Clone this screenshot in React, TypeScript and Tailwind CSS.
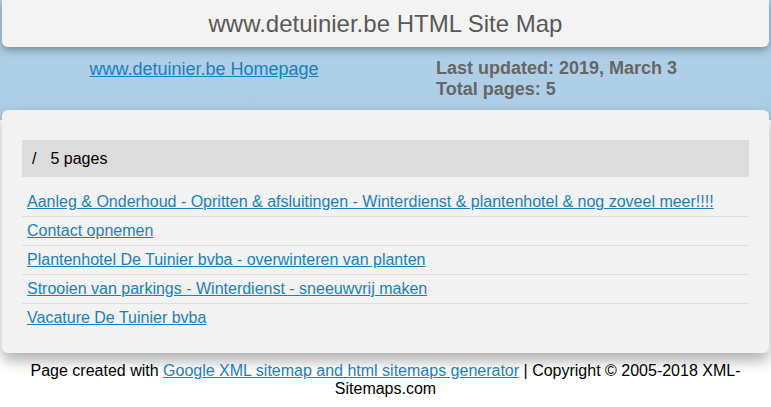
import React from "react";

const links = [
  "Aanleg & Onderhoud - Opritten & afsluitingen - Winterdienst & plantenhotel & nog zoveel meer!!!!",
  "Contact opnemen",
  "Plantenhotel De Tuinier bvba - overwinteren van planten",
  "Strooien van parkings - Winterdienst - sneeuwvrij maken",
  "Vacature De Tuinier bvba",
];

export default function App() {
  return (
    <div
      className="min-h-[407px] w-full bg-[linear-gradient(180deg,#b1d1e8_0px,#adcee6_100px,#a9c9e0_120px,#ffffff_120px)] font-['Liberation_Sans',Arial,sans-serif]"
    >
      <div className="mx-[2px] flex h-[47px] items-center justify-center rounded-b-[6px] bg-[#f3f3f3] shadow-[0_3px_8px_rgba(0,0,0,0.35)]">
        <h1 className="text-[24px] leading-none text-[#595959]">www.detuinier.be HTML Site Map</h1>
      </div>

      <div className="flex h-[63px] pt-[11px]">
        <div className="w-[408px] text-center">
          <a href="#" className="text-[18px] leading-[21px] text-[#1a80b9] underline">
            www.detuinier.be Homepage
          </a>
        </div>
        <div className="pl-[28px] text-[18px] font-bold leading-[21px] text-[#666666]">
          <div>Last updated: 2019, March 3</div>
          <div>Total pages: 5</div>
        </div>
      </div>

      <div className="mx-[2px] rounded-[6px] bg-[#f2f2f2] px-[20px] pb-[21px] pt-[30px] shadow-[0_8px_14px_rgba(0,0,0,0.3)]">
        <div className="flex h-[37px] items-center bg-[#dcdcdc] pl-[10px] text-[16px] text-black">
          <span>/</span>
          <span className="ml-[14px]">5 pages</span>
        </div>
        <ul className="mt-[11px]">
          {links.map((l, i) => (
            <li
              key={i}
              className={`px-[5px] py-[5px] text-[16px] leading-[18px] ${
                i < links.length - 1 ? "border-b border-[#dddddd]" : ""
              }`}
            >
              <a href="#" className="text-[#1a80b9] underline">
                {l}
              </a>
            </li>
          ))}
        </ul>
      </div>

      <div className="px-[20px] pt-[9px] text-center text-[16px] leading-[18px] text-black">
        Page created with{" "}
        <a href="#" className="text-[#1a80b9] underline">
          Google XML sitemap and html sitemaps generator
        </a>{" "}
        | Copyright © 2005-2018 XML-Sitemaps.com
      </div>
    </div>
  );
}
